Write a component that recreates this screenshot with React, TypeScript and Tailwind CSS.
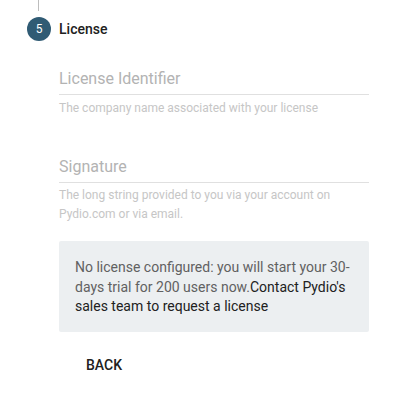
export default function App() {
  return (
    <div className="w-[402px] h-[393px] bg-white overflow-hidden" style={{ fontFamily: 'Roboto, "Noto Sans", sans-serif' }}>
      <div className="ml-[38px] w-px h-[11px] bg-[#bdbdbd]" />
      <div className="flex items-center mt-[6px] ml-[27px]">
        <div className="w-6 h-6 rounded-full bg-[#305b74] text-white text-[12px] flex items-center justify-center">5</div>
        <div className="ml-[8px] text-[14px] font-medium text-[#212121]">License</div>
      </div>
      <div className="ml-[59px] w-[310px]">
        <div className="mt-[26px] text-[16px] leading-[24px] text-[#b3b3b3]">License Identifier</div>
        <div className="mt-[3px] h-px bg-[#e0e0e0]" />
        <div className="mt-[4px] text-[12px] leading-[18px] text-[#c6c6c6]">The company name associated with your license</div>
        <div className="mt-[38px] text-[16px] leading-[24px] text-[#b3b3b3]">Signature</div>
        <div className="mt-[3px] h-px bg-[#e0e0e0]" />
        <div className="mt-[3px] text-[12px] leading-[19px] text-[#c6c6c6]">The long string provided to you via your account on Pydio.com or via email.</div>
        <div className="mt-[17px] rounded-[2px] bg-[#eceff1] pt-[17px] pb-[15px] px-4 text-[14px] leading-[1.4] text-[#212121]">
          <span className="text-[#616161]">No license configured: you will start your 30-days trial for 200 users now.</span>Contact Pydio's sales team to request a license
        </div>
        <div className="mt-[16px] ml-[11px] h-9 px-4 inline-flex items-center text-[14px] font-medium text-[#212121] uppercase">Back</div>
      </div>
    </div>
  );
}
